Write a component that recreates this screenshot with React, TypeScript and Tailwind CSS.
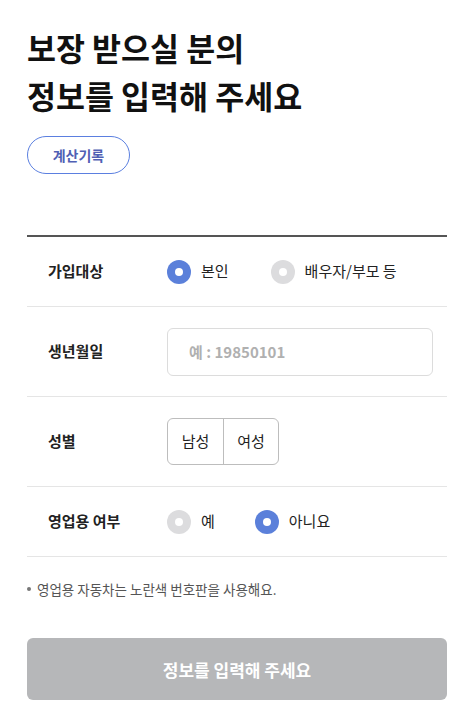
const font = { fontFamily: '"Noto Sans CJK KR", "Noto Sans", sans-serif' };

const Radio = ({ checked, label }: { checked: boolean; label: string }) => (
  <label className="flex items-center gap-[10px] cursor-pointer">
    <span
      className={`flex h-6 w-6 items-center justify-center rounded-full ${
        checked ? "bg-[#5b80da]" : "bg-[#dcdcde]"
      }`}
    >
      <span className="h-2 w-2 rounded-full bg-white" />
    </span>
    <span className="text-[15px] text-[#222]">{label}</span>
  </label>
);

const Row = ({
  label,
  children,
  tall,
}: {
  label: string;
  children: React.ReactNode;
  tall?: boolean;
}) => (
  <div
    className={`flex items-center border-b border-[#e5e5e5] ${
      tall ? "h-[90px]" : "h-[70px]"
    }`}
  >
    <div className="w-[140px] pl-[21px] text-[15px] font-bold text-[#222]">
      {label}
    </div>
    <div className="flex flex-1 items-center">{children}</div>
  </div>
);

export default function App() {
  return (
    <div className="min-h-screen bg-white pl-[27px] pr-[13px] pt-[23px]" style={font}>
      <h1 className="text-[31.5px] font-bold leading-[48px] text-[#111]">
        보장 받으실 분의
        <br />
        정보를 입력해 주세요
      </h1>
      <button className="mt-[17px] h-[38px] w-[103px] rounded-full border border-[#5b7fe0] text-[14px] font-bold text-[#5060b4]">
        계산기록
      </button>

      <div className="mt-[61px] border-t-2 border-[#555]">
        <Row label="가입대상">
          <div className="flex gap-[42px]">
            <Radio checked label="본인" />
            <Radio checked={false} label="배우자/부모 등" />
          </div>
        </Row>
        <Row label="생년월일" tall>
          <input
            placeholder="예 : 19850101"
            className="h-12 w-[266px] rounded-md border border-[#dcdcdc] px-[21px] text-[15px] font-bold placeholder:text-[#b0b0b0] outline-none"
          />
        </Row>
        <Row label="성별" tall>
          <div className="flex h-[47px] overflow-hidden rounded-md border border-[#bdbdbd]">
            <button className="w-[55px] text-[15px] text-[#222]">남성</button>
            <button className="w-[55px] border-l border-[#bdbdbd] text-[15px] text-[#222]">
              여성
            </button>
          </div>
        </Row>
        <Row label="영업용 여부">
          <div className="flex gap-[40px]">
            <Radio checked={false} label="예" />
            <Radio checked label="아니요" />
          </div>
        </Row>
      </div>

      <p className="mt-[22px] flex items-center gap-[6px] text-[13.5px] text-[#555]">
        <span className="h-[4px] w-[4px] rounded-full bg-[#777]" />
        영업용 자동차는 노란색 번호판을 사용해요.
      </p>

      <button className="mt-[39px] h-[62px] w-full rounded-md bg-[#b6b7b9] text-[17px] font-bold text-white">
        정보를 입력해 주세요
      </button>
    </div>
  );
}
